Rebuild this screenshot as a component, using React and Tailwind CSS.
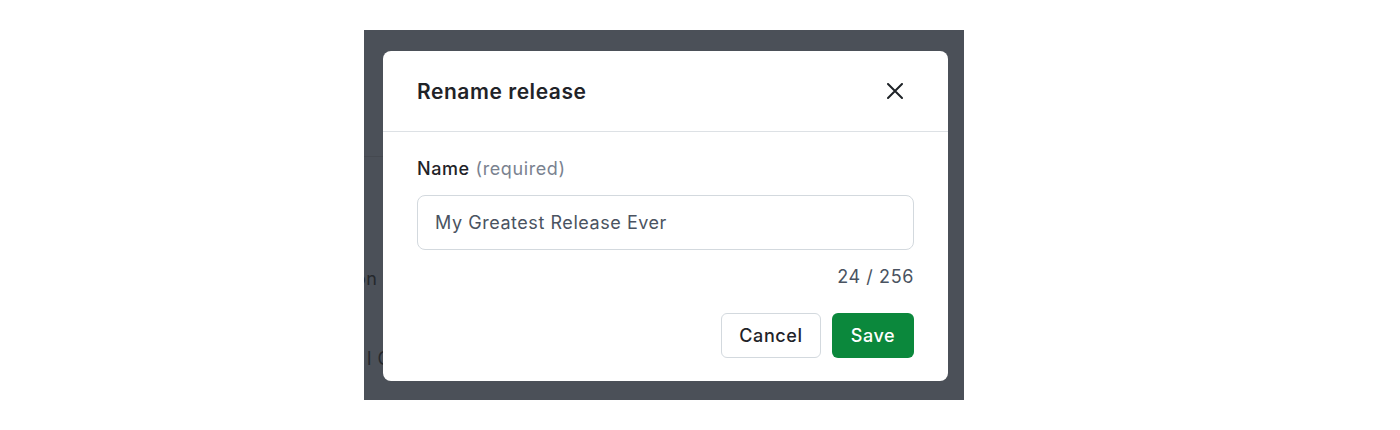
export default function App() {
  return (
    <div className="w-[1400px] h-[430px] bg-white pt-[30px] pl-[364px]" style={{ fontFamily: "Inter, 'Noto Sans', sans-serif" }}>
      <div className="relative w-[600px] h-[370px] bg-[#4b5058] pt-[21px] pl-[19px] overflow-hidden">
        <div className="absolute left-0 top-[126px] w-[19px] h-px bg-[#454950]" />
        <div className="absolute left-[-9px] top-[237px] text-[18px] leading-[24px] text-[#25282c] tracking-[0.5px]">on</div>
        <div className="absolute left-[3px] top-[317px] text-[18px] leading-[24px] text-[#25282c] tracking-[0.5px]">l C</div>
        <div className="relative w-[565px] h-[330px] bg-white rounded-[8px]">
          <div className="h-[81px] border-b border-[#dde1e5] pl-[34px] pr-[45px] flex items-center justify-between">
            <h2 className="text-[21px] font-semibold text-[#1f2328] tracking-[0.55px] pt-px">Rename release</h2>
            <svg width="16" height="16" viewBox="0 0 16 16" className="text-[#1f2328]">
              <path d="M1 1 L15 15 M15 1 L1 15" stroke="currentColor" strokeWidth="2" strokeLinecap="round" />
            </svg>
          </div>
          <div className="px-[34px] pt-[25px]">
            <div className="text-[18px] leading-[24px] tracking-[0.6px]">
              <span className="font-medium text-[#1f2328]">Name</span>{" "}
              <span className="text-[#7a8290]">(required)</span>
            </div>
            <div className="mt-[14px] h-[55px] border border-[#d3d9de] rounded-[8px] px-[17px] flex items-center text-[18px] tracking-[0.55px] text-[#4a5361]">
              My Greatest Release Ever
            </div>
            <div className="mt-[15px] text-right text-[18px] leading-[24px] tracking-[0.6px] text-[#4a5361]">24 / 256</div>
            <div className="mt-[24px] flex justify-end gap-[11px]">
              <button className="w-[100px] h-[45px] border border-[#d3d9de] rounded-[6px] bg-white text-[18px] font-medium tracking-[0.6px] text-[#1f2328]">Cancel</button>
              <button className="w-[82px] h-[45px] rounded-[6px] bg-[#0b883c] text-[18px] font-medium tracking-[0.6px] text-white">Save</button>
            </div>
          </div>
        </div>
      </div>
    </div>
  );
}
